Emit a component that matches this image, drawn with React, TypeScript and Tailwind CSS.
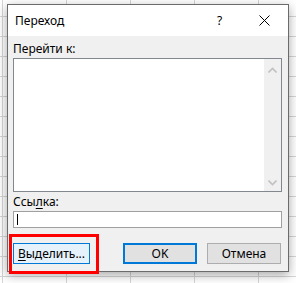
import React from 'react';

const font = { fontFamily: '"Noto Sans", "Open Sans", sans-serif' };

function ScrollArrow({ down }: { down?: boolean }) {
  return (
    <svg width="9" height="6" viewBox="0 0 9 6" className="block">
      <path
        d={down ? 'M0.5 0.5 L4.5 4.5 L8.5 0.5' : 'M0.5 5.5 L4.5 1.5 L8.5 5.5'}
        fill="none"
        stroke="#c2c2c2"
        strokeWidth="1.6"
      />
    </svg>
  );
}

function App() {
  return (
    <div
      className="relative w-[296px] h-[283px] overflow-hidden bg-white bg-[linear-gradient(to_right,#d6d6d6_1px,transparent_1px),linear-gradient(to_bottom,#d6d6d6_1px,transparent_1px)] bg-[size:64px_20px] bg-[position:2px_16px] text-[12px] text-black"
      style={font}
    >
      <div className="ml-[7px] mt-[4px] w-[282px] h-[268px] flex flex-col border border-[#6b6b6b] bg-[#f0f0f0] shadow-[0_3px_10px_rgba(0,0,0,0.35)]">
        {/* title bar */}
        <div className="h-[31px] bg-white flex items-center pl-[7px]">
          <span className="leading-[16px] flex-1">Переход</span>
          <span className="leading-[16px] w-[6px] mr-[36px]">?</span>
          <svg width="11" height="11" viewBox="0 0 11 11" className="mr-[18px]">
            <path d="M0.5 0.5 L10.5 10.5 M10.5 0.5 L0.5 10.5" stroke="#000" strokeWidth="1" />
          </svg>
        </div>

        {/* body */}
        <div className="flex flex-col pl-[5px]">
          <div className="leading-[16px] mt-[5px] mb-[1px]">Перейти к:</div>
          <div className="w-[269px] h-[134px] border border-[#828790] bg-white flex">
            <div className="flex-1" />
            <div className="w-[17px] bg-[#f0f0f0] flex flex-col items-center justify-between pt-[8px] pb-[5px]">
              <ScrollArrow />
              <ScrollArrow down />
            </div>
          </div>
          <div className="leading-[16px] mt-[2px] mb-[1px]">
            Ссы<span className="underline underline-offset-2">л</span>ка:
          </div>
          <div className="w-[269px] h-[17px] border border-[#a0a0a0] bg-white flex items-center pl-[3px]">
            <div className="w-[1px] h-[11px] bg-black" />
          </div>
          <div className="flex mt-[15px]">
            <button className="w-[77px] h-[21px] border border-[#0078d7] bg-[#e5f1fb] leading-[16px]">
              <span className="underline underline-offset-2">В</span>ыделить...
            </button>
            <button className="ml-[33px] w-[74px] h-[21px] border-2 border-[#0078d7] bg-[#e1e1e1] leading-[16px]">
              OK
            </button>
            <button className="ml-[10px] w-[74px] h-[21px] border border-[#adadad] bg-[#e1e1e1] leading-[16px]">
              Отмена
            </button>
          </div>
        </div>
      </div>

      {/* red highlight */}
      <div className="absolute left-[9px] top-[234px] w-[90px] h-[40px] border-[3px] border-[#ff0000]" />
    </div>
  );
}

export default App;
